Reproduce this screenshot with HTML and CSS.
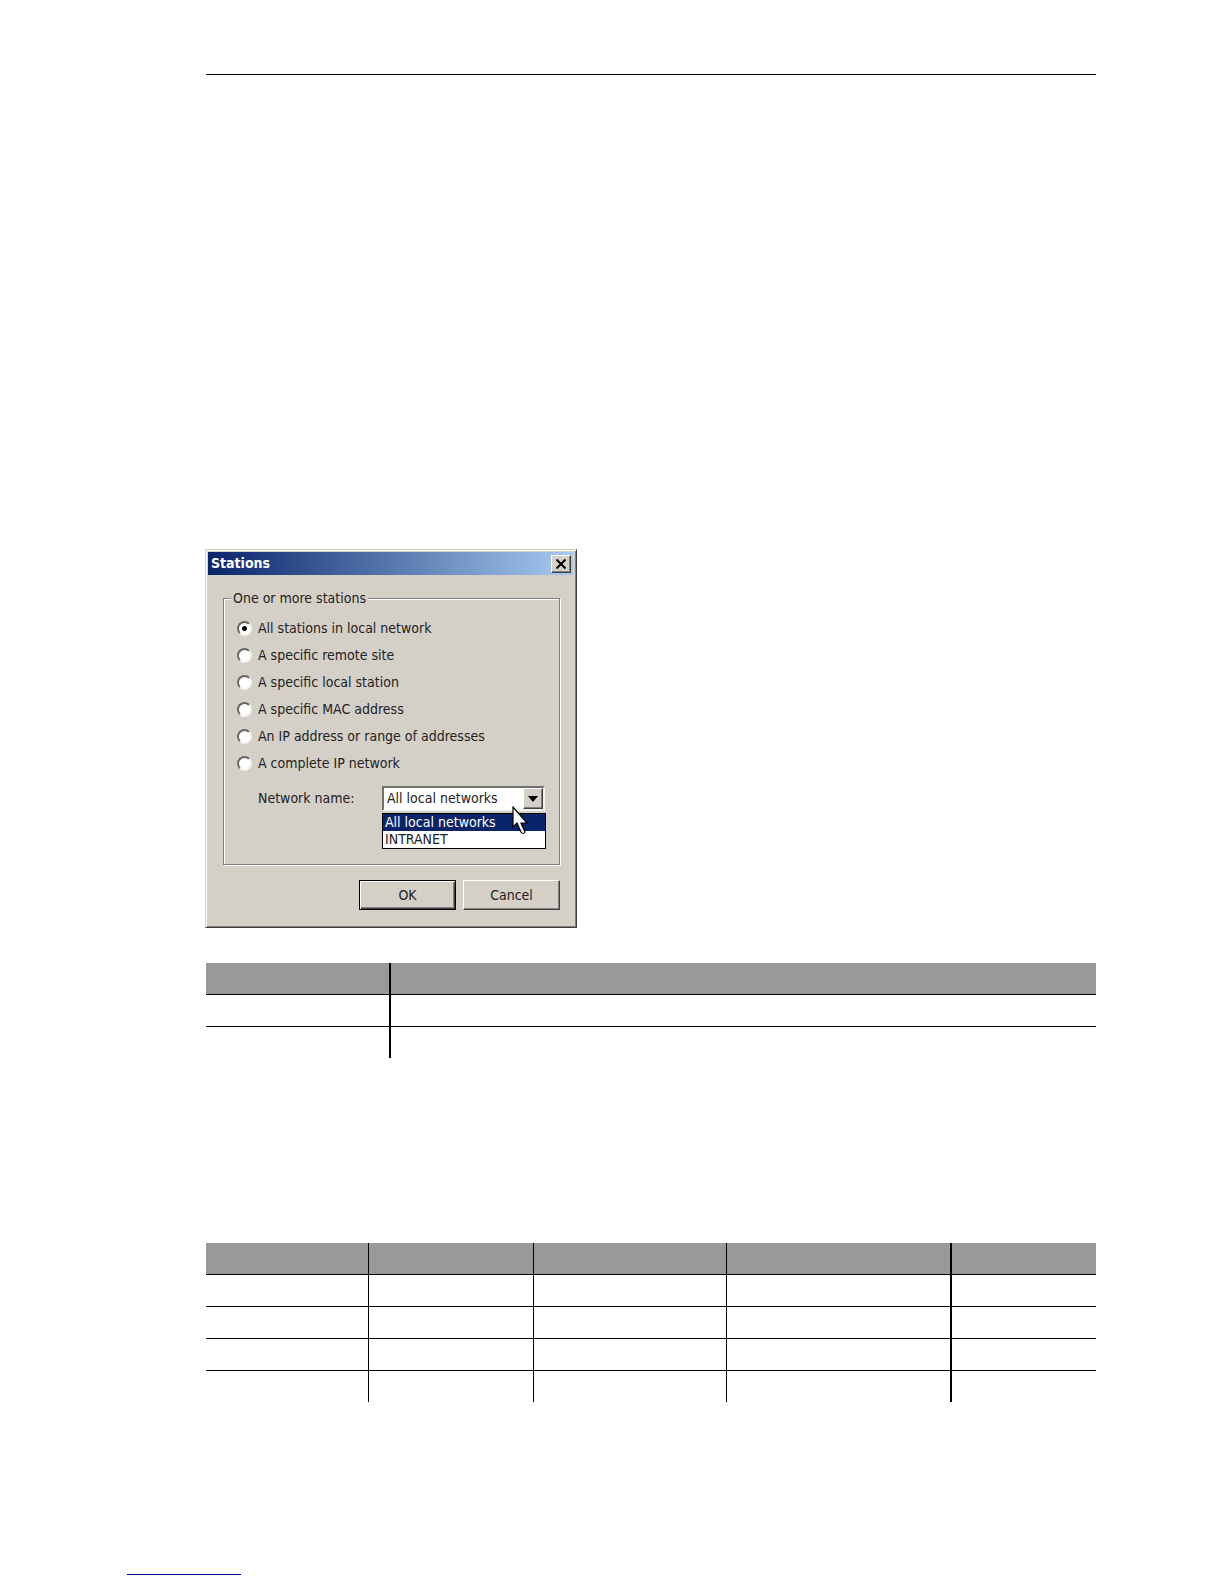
FILE: index.html
```
<!DOCTYPE html>
<html lang="en">
<head>
    <meta charset="utf-8">
    <title>Stations</title>
    <link rel="stylesheet" href="styles.css">
</head>
<body>
    <main class="page">
        <hr class="page-rule">

        <form class="dialog">
            <div class="title-bar">
                <h1>Stations</h1>
                <button type="button" class="close-btn">
                    <svg width="12" height="10" viewBox="0 0 12 10"><path d="M1.5 .5 10.5 9.5M10.5 .5 1.5 9.5" stroke="#000" stroke-width="2"/></svg>
                </button>
            </div>

            <fieldset class="group">
                <legend>One or more stations</legend>
                <label class="option"><input type="radio" name="station" checked> All stations in local network</label>
                <label class="option"><input type="radio" name="station"> A specific remote site</label>
                <label class="option"><input type="radio" name="station"> A specific local station</label>
                <label class="option"><input type="radio" name="station"> A specific MAC address</label>
                <label class="option"><input type="radio" name="station"> An IP address or range of addresses</label>
                <label class="option"><input type="radio" name="station"> A complete IP network</label>

                <div class="network-row">
                    <label for="network">Network name:</label>
                    <div class="combo">
                        <select id="network">
                            <option>All local networks</option>
                            <option>INTRANET</option>
                        </select>
                        <span class="combo-arrow">
                            <svg width="10" height="6" viewBox="0 0 10 6"><path d="M0 0h10L5 6z"/></svg>
                        </span>
                        <ul class="combo-list">
                            <li class="selected">All local networks</li>
                            <li>INTRANET</li>
                        </ul>
                        <svg class="cursor" width="17" height="29" viewBox="0 0 17 29">
                            <path d="M1 1v20l4-4 4 9q2 3 4 0l-4-9h6z" fill="#fff" stroke="#000" stroke-width="1.2"/>
                        </svg>
                    </div>
                </div>
            </fieldset>

            <div class="buttons">
                <button type="button" class="btn btn-default">OK</button>
                <button type="button" class="btn">Cancel</button>
            </div>
        </form>

        <table class="grid grid-values">
            <colgroup><col class="name"><col></colgroup>
            <thead>
                <tr><th></th><th></th></tr>
            </thead>
            <tbody>
                <tr><td></td><td></td></tr>
                <tr><td></td><td></td></tr>
            </tbody>
        </table>

        <table class="grid grid-rules">
            <colgroup><col class="c1"><col class="c2"><col class="c3"><col class="c4"><col></colgroup>
            <thead>
                <tr><th></th><th></th><th></th><th></th><th></th></tr>
            </thead>
            <tbody>
                <tr><td></td><td></td><td></td><td></td><td></td></tr>
                <tr><td></td><td></td><td></td><td></td><td></td></tr>
                <tr><td></td><td></td><td></td><td></td><td></td></tr>
                <tr><td></td><td></td><td></td><td></td><td></td></tr>
            </tbody>
        </table>
    </main>

    <footer>
        <hr class="footer-rule">
    </footer>
</body>
</html>
```
FILE: styles.css
```
* { box-sizing: border-box; }
body {
    margin: 0;
    background: #fff;
    color: #222;
    font: 14px/17px "DejaVu Sans Condensed", "DejaVu Sans", Tahoma, sans-serif;
}
.page { padding: 74px 128px 0 206px; }
.page-rule {
    height: 1px;
    margin: 0 0 474px;
    border: 0;
    background: #000;
}

/* dialog window */
.dialog {
    width: 372px;
    margin-left: -1px;
    padding: 2px 3px 2px 2px;
    background: #d4d0c8;
    border: 1px solid;
    border-color: #d4d0c8 #404040 #404040 #d4d0c8;
    box-shadow: inset 1px 1px #fff, inset -1px -1px #808080;
}
.title-bar {
    display: flex;
    align-items: center;
    justify-content: space-between;
    height: 23px;
    padding: 0 2px 0 3px;
    background: linear-gradient(to right, #0a246a, #a6caf0);
}
.title-bar h1 {
    margin: 0;
    color: #fff;
    font-size: 14px;
    line-height: 17px;
}
.close-btn {
    display: flex;
    align-items: center;
    justify-content: center;
    width: 20px;
    height: 18px;
    padding: 0;
    background: #d4d0c8;
    border: 1px solid;
    border-color: #fff #404040 #404040 #fff;
    box-shadow: inset -1px -1px #808080;
}

.group {
    height: 275px;
    margin: 15px 13px 0 15px;
    padding: 8px 13px 0;
    border: 1px solid #808080;
    box-shadow: 1px 1px #fff, inset 1px 1px #fff;
}
.group legend {
    margin-left: -6px;
    padding: 0 2px;
    background: #d4d0c8;
}
.option {
    display: flex;
    align-items: center;
    gap: 6px;
    height: 27px;
}
.option input {
    appearance: none;
    width: 15px;
    height: 15px;
    margin: 0;
    background: #fff;
    border: 2px solid;
    border-color: #666 #f4f2ee #f4f2ee #666;
    border-radius: 50%;
}
.option input:checked { background: radial-gradient(circle, #000 2px, #fff 3px); }

/* drop-down, shown open */
.network-row {
    display: flex;
    align-items: center;
    margin: 9px 0 0 21px;
}
.network-row label { width: 124px; }
.combo {
    position: relative;
    width: 163px;
}
.combo select {
    display: block;
    appearance: none;
    width: 100%;
    height: 25px;
    padding: 0 24px 0 3px;
    background: #fff;
    color: inherit;
    font: inherit;
    border: 2px solid;
    border-color: #707070 #f4f2ee #f4f2ee #707070;
    border-radius: 0;
}
.combo-arrow {
    position: absolute;
    top: 2px;
    right: 2px;
    display: flex;
    align-items: center;
    justify-content: center;
    width: 20px;
    height: 21px;
    background: #d4d0c8;
    border: 1px solid;
    border-color: #fff #404040 #404040 #fff;
    box-shadow: inset -1px -1px #808080;
    pointer-events: none;
}
.combo-list {
    position: absolute;
    top: 27px;
    left: 0;
    width: 164px;
    margin: 0;
    padding: 0;
    list-style: none;
    background: #fff;
    border: 1px solid #000;
}
.combo-list li { padding-left: 2px; }
.combo-list .selected {
    background: #0a246a;
    color: #fff;
}
.cursor {
    position: absolute;
    top: 20px;
    left: 130px;
}

.buttons {
    display: flex;
    justify-content: flex-end;
    gap: 7px;
    margin: 15px 13px 15px;
}
.btn {
    width: 97px;
    height: 30px;
    padding: 0;
    background: #d4d0c8;
    color: inherit;
    font: inherit;
    border: 1px solid;
    border-color: #fff #404040 #404040 #fff;
    box-shadow: inset -1px -1px #808080;
}
.btn-default {
    border: 1px solid #000;
    box-shadow: inset 1px 1px #fff, inset -1px -1px #404040, inset -2px -2px #808080;
}

/* ruled tables */
.grid {
    width: 100%;
    table-layout: fixed;
    border-collapse: separate;
    border-spacing: 0;
}
.grid th, .grid td {
    height: 32px;
    padding: 0;
    border-bottom: 1px solid #000;
    border-right: 1px solid #000;
}
.grid th { background: #999; }
.grid th:last-child, .grid td:last-child { border-right: 0; }
.grid tbody tr:last-child td {
    height: 31px;
    border-bottom: 0;
}
.grid-values { margin-top: 35px; }
.grid-values th:first-child, .grid-values td:first-child,
.grid-rules th:nth-child(4), .grid-rules td:nth-child(4) { border-right-width: 2px; }
.grid-values .name { width: 185px; }
.grid-rules { margin-top: 185px; }
.grid-rules .c1 { width: 163px; }
.grid-rules .c2 { width: 165px; }
.grid-rules .c3 { width: 193px; }
.grid-rules .c4 { width: 225px; }

footer { padding: 172px 0 8px 127px; }
.footer-rule {
    width: 114px;
    height: 1px;
    margin: 0;
    border: 0;
    background: #000080;
}
```
